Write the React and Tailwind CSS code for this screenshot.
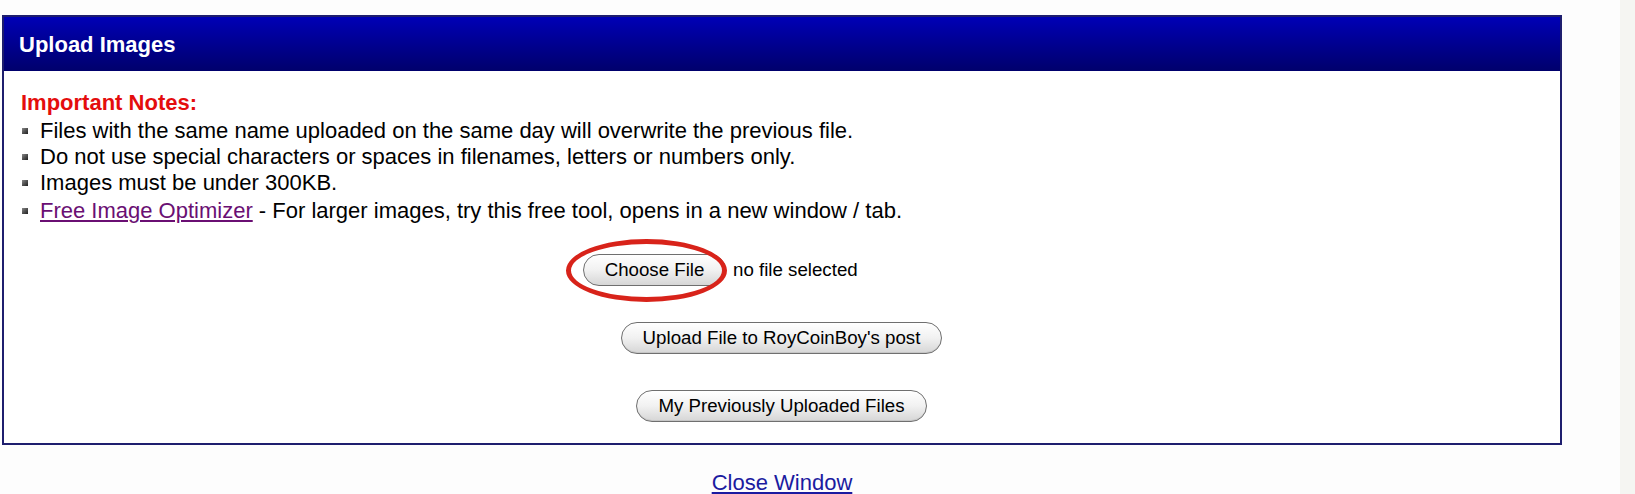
import { useState } from 'react';

const notes = [
  'Files with the same name uploaded on the same day will overwrite the previous file.',
  'Do not use special characters or spaces in filenames, letters or numbers only.',
  'Images must be under 300KB.',
];

function Bullet() {
  return <span className="w-[6px] h-[6px] shrink-0 ml-[1px] bg-gradient-to-br from-[#8a8a8a] to-[#202020]" />;
}

function PillButton({ children, onClick }) {
  return (
    <button
      onClick={onClick}
      className="h-[32px] px-[21px] rounded-full border border-[#6f6f6f] bg-gradient-to-b from-white via-[#f1f1f1] to-[#d6d6d6] text-[18.7px] leading-none text-black shadow-[inset_0_-1px_0_rgba(0,0,0,0.08)]"
    >
      {children}
    </button>
  );
}

export default function App() {
  const [fileName, setFileName] = useState('');

  return (
    <div className="flex h-[494px] bg-[#fdfdfd] font-['Liberation_Sans',Arial,sans-serif] text-black">
      <div className="flex-1 pt-[15px] pl-[2px]">
        <div className="w-[1560px]">
          <div className="h-[56px] flex items-center pl-[15px] border-2 border-b-0 border-[#1e1e6e] bg-gradient-to-b from-[#0000b6] to-[#00006c]">
            <h1 className="text-white font-bold text-[22px]">Upload Images</h1>
          </div>

          <div className="bg-white border-2 border-t-0 border-[#1e1e6e] pt-[19px] pb-[21px] pl-[17px] pr-4">
            <h2 className="text-[#e40d0d] font-bold text-[22px] leading-[26px]">Important Notes:</h2>
            <ul className="mt-[2px] text-[22px] leading-[26px]">
              {notes.map((n) => (
                <li key={n} className="flex items-center gap-[12px]">
                  <Bullet />
                  <span>{n}</span>
                </li>
              ))}
              <li className="flex items-center gap-[12px] mt-[2px]">
                <Bullet />
                <span>
                  <a href="#" className="text-[#6a0f73] underline">Free Image Optimizer</a> - For larger images, try this free tool, opens in a new window / tab.
                </span>
              </li>
            </ul>

            <div className="mt-[30px] ml-[562px] w-[398px] flex items-center">
              <label className="relative cursor-pointer">
                <input
                  type="file"
                  className="hidden"
                  onChange={(e) => setFileName(e.target.files?.[0]?.name || '')}
                />
                <span className="h-[32px] w-[143px] flex items-center justify-center rounded-full border border-[#6f6f6f] bg-gradient-to-b from-white via-[#f1f1f1] to-[#d6d6d6] text-[18.7px] leading-none">
                  Choose File
                </span>
                <span className="absolute -left-[17px] -top-[15px] w-[161px] h-[63px] rounded-[50%] border-[5px] border-[#d8231a] pointer-events-none" />
              </label>
              <span className="ml-[7px] text-[18.7px]">{fileName || 'no file selected'}</span>
            </div>

            <div className="mt-[36px] flex justify-center pr-[2px]">
              <PillButton>Upload File to RoyCoinBoy's post</PillButton>
            </div>
            <div className="mt-[36px] flex justify-center pr-[2px]">
              <PillButton>My Previously Uploaded Files</PillButton>
            </div>
          </div>

          <div className="mt-[25px] flex justify-center">
            <a href="#" className="text-[22px] leading-[26px] text-[#1b1ba0] underline">Close Window</a>
          </div>
        </div>
      </div>
      <div className="w-[15px] bg-[#f5f5f2]" />
    </div>
  );
}
